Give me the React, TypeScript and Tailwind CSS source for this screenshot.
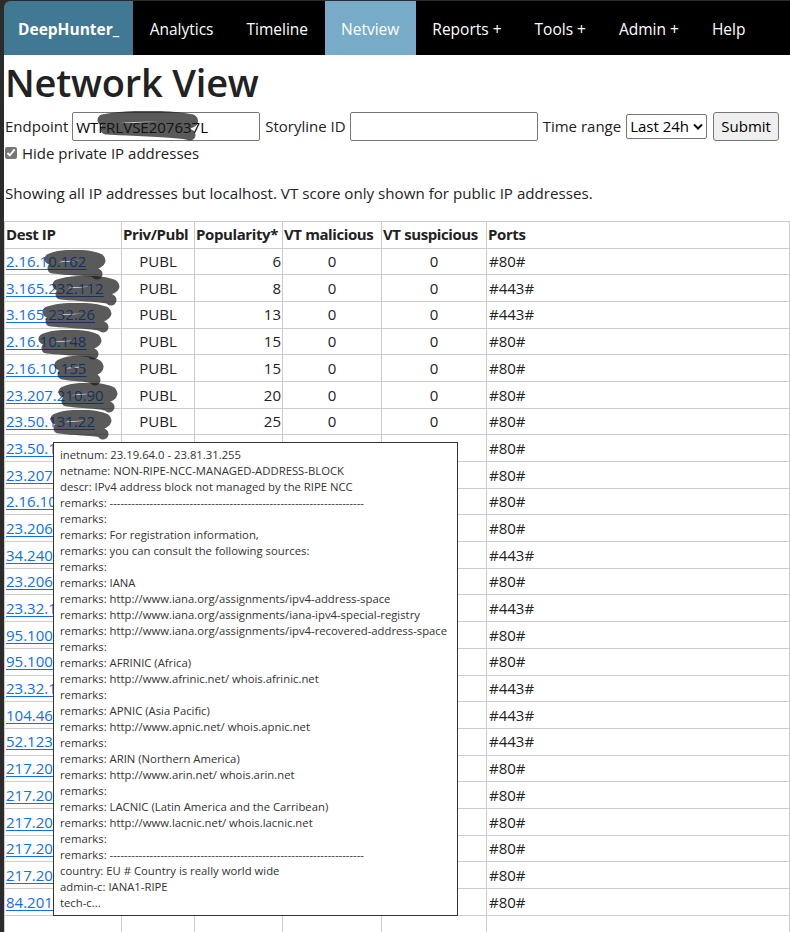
import React from 'react';

const navItems = [
  { label: 'Analytics', active: false },
  { label: 'Timeline', active: false },
  { label: 'Netview', active: true },
  { label: 'Reports +', active: false },
  { label: 'Tools +', active: false },
  { label: 'Admin +', active: false },
  { label: 'Help', active: false },
];

type Row = { ip: string; pop: number | string; port: string; blot?: [number, number] };

const rows: Row[] = [
  { ip: '2.16.10.162', pop: 6, port: '#80#', blot: [38, 64] },
  { ip: '3.165.232.112', pop: 8, port: '#443#', blot: [46, 70] },
  { ip: '3.165.232.26', pop: 13, port: '#443#', blot: [36, 72] },
  { ip: '2.16.10.148', pop: 15, port: '#80#', blot: [32, 66] },
  { ip: '2.16.10.155', pop: 15, port: '#80#', blot: [48, 52] },
  { ip: '23.207.210.90', pop: 20, port: '#80#', blot: [52, 62] },
  { ip: '23.50.131.22', pop: 25, port: '#80#', blot: [44, 64] },
  { ip: '23.50.131.10', pop: 27, port: '#80#' },
  { ip: '23.207.210.72', pop: 31, port: '#80#' },
  { ip: '2.16.10.170', pop: 34, port: '#80#' },
  { ip: '23.206.229.8', pop: 40, port: '#80#' },
  { ip: '34.240.12.201', pop: 52, port: '#443#' },
  { ip: '23.206.229.41', pop: 61, port: '#80#' },
  { ip: '23.32.16.120', pop: 77, port: '#443#' },
  { ip: '95.100.52.14', pop: 93, port: '#80#' },
  { ip: '95.100.52.30', pop: 110, port: '#80#' },
  { ip: '23.32.16.99', pop: 154, port: '#443#' },
  { ip: '104.46.162.224', pop: 213, port: '#443#' },
  { ip: '52.123.129.14', pop: 305, port: '#443#' },
  { ip: '217.20.57.19', pop: 420, port: '#80#' },
  { ip: '217.20.57.34', pop: 566, port: '#80#' },
  { ip: '217.20.57.35', pop: 781, port: '#80#' },
  { ip: '217.20.57.18', pop: 1020, port: '#80#' },
  { ip: '217.20.57.20', pop: 1744, port: '#80#' },
  { ip: '84.201.210.23', pop: 3013, port: '#80#' },
];

const dashes = '-'.repeat(70);

const whois = [
  'inetnum: 23.19.64.0 - 23.81.31.255',
  'netname: NON-RIPE-NCC-MANAGED-ADDRESS-BLOCK',
  'descr: IPv4 address block not managed by the RIPE NCC',
  `remarks: ${dashes}`,
  'remarks:',
  'remarks: For registration information,',
  'remarks: you can consult the following sources:',
  'remarks:',
  'remarks: IANA',
  'remarks: http://www.iana.org/assignments/ipv4-address-space',
  'remarks: http://www.iana.org/assignments/iana-ipv4-special-registry',
  'remarks: http://www.iana.org/assignments/ipv4-recovered-address-space',
  'remarks:',
  'remarks: AFRINIC (Africa)',
  'remarks: http://www.afrinic.net/ whois.afrinic.net',
  'remarks:',
  'remarks: APNIC (Asia Pacific)',
  'remarks: http://www.apnic.net/ whois.apnic.net',
  'remarks:',
  'remarks: ARIN (Northern America)',
  'remarks: http://www.arin.net/ whois.arin.net',
  'remarks:',
  'remarks: LACNIC (Latin America and the Carribean)',
  'remarks: http://www.lacnic.net/ whois.lacnic.net',
  'remarks:',
  `remarks: ${dashes}`,
  'country: EU # Country is really world wide',
  'admin-c: IANA1-RIPE',
  'tech-c...',
];

// marker scribble used to redact part of a value
const Blot: React.FC<{ left: number; width: number; className?: string }> = ({ left, width, className }) => (
  <svg
    className={`pointer-events-none absolute ${className ?? 'top-[1px]'}`}
    style={{ left }}
    width={width}
    height={32}
    viewBox={`0 0 ${width} 32`}
  >
    <path
      d={`M7 9 C ${width * 0.3} 4, ${width * 0.7} 4, ${width - 8} 9 C ${width - 2} 14, ${width * 0.6} 17, 10 18 C ${width * 0.4} 20, ${width * 0.8} 20, ${width - 10} 24`}
      fill="none"
      stroke="#1a1a1a"
      strokeOpacity={0.72}
      strokeWidth={11}
      strokeLinecap="round"
      strokeLinejoin="round"
    />
  </svg>
);

const App: React.FC = () => {
  return (
    <div className="min-h-screen bg-[#2b2b2b] pl-[4px] pt-[1px]">
      <div className="relative min-h-[931px] overflow-hidden rounded-tl-[7px] bg-white font-['Open_Sans',sans-serif] text-[#222]">
        {/* Top bar */}
        <nav className="flex h-[54px] items-stretch bg-black text-[15.5px] text-white">
          <a href="#" className="flex items-center bg-[#417894] px-[14px] pt-[3px] font-bold">
            DeepHunter_
          </a>
          {navItems.map((item) => (
            <a
              key={item.label}
              href="#"
              className={`flex items-center px-[16.5px] pt-[3px] ${item.active ? 'bg-[#77abc7]' : ''}`}
            >
              {item.label}
            </a>
          ))}
        </nav>

        <div className="pl-[1px]">
          <h1 className="mt-[5px] text-[38px] leading-[44px] font-semibold tracking-[-0.2px] text-[#222]">Network View</h1>

          {/* Filters */}
          <form className="mt-[8px] flex items-center text-[15px]">
            <label>Endpoint</label>
            <div className="relative ml-[4px]">
              <input
                className="h-[29px] w-[188px] rounded-[2px] border border-[#767676] px-[3px] text-[15px] text-black"
                defaultValue="WTFRLVSE207637L"
              />
              <Blot left={24} width={104} className="top-[-1px]" />
            </div>
            <label className="ml-[5px]">Storyline ID</label>
            <input className="ml-[4px] h-[29px] w-[188px] rounded-[2px] border border-[#767676]" />
            <label className="ml-[5px]">Time range</label>
            <div className="relative ml-[5px]">
              <select className="h-[25px] w-[81px] appearance-none rounded-[2px] border border-[#767676] pl-[3px] text-[15px] text-black">
                <option>Last 24h</option>
              </select>
              <svg className="pointer-events-none absolute top-[9px] right-[4px]" width="10" height="7" viewBox="0 0 10 7">
                <path d="M1 1.5 L5 5.5 L9 1.5" fill="none" stroke="#111" strokeWidth="2" />
              </svg>
            </div>
            <button
              type="button"
              className="ml-[6px] h-[29px] w-[66px] rounded-[3px] border border-[#767676] bg-[#efefef] text-[15px] text-black"
            >
              Submit
            </button>
          </form>

          <label className="mt-[1px] flex items-center text-[15px]">
            <input type="checkbox" defaultChecked className="h-[12px] w-[12px] accent-[#767676]" />
            <span className="ml-[5px]">Hide private IP addresses</span>
          </label>

          <p className="mt-[17px] text-[15.15px] leading-[22px]">
            Showing all IP addresses but localhost. VT score only shown for public IP addresses.
          </p>
        </div>

        {/* Results */}
        <table className="mt-[17px] w-full table-fixed border-collapse text-[15px]">
          <colgroup>
            <col className="w-[117px]" />
            <col className="w-[73px]" />
            <col className="w-[88px]" />
            <col className="w-[99px]" />
            <col className="w-[105px]" />
            <col />
          </colgroup>
          <thead>
            <tr className="h-[27px] text-left font-bold whitespace-nowrap">
              <th className="border border-[#ccc] px-[1px] text-[15px] tracking-[-0.4px]">Dest IP</th>
              <th className="border border-[#ccc] px-[1px] text-[15px] tracking-[-0.4px]">Priv/Publ</th>
              <th className="border border-[#ccc] px-[1px] text-[15px] tracking-[-0.4px]">Popularity*</th>
              <th className="border border-[#ccc] px-[1px] text-[15px] tracking-[-0.4px]">VT malicious</th>
              <th className="border border-[#ccc] px-[1px] text-[15px] tracking-[-0.4px]">VT suspicious</th>
              <th className="border border-[#ccc] px-[1px] text-[15px] tracking-[-0.4px]">Ports</th>
            </tr>
          </thead>
          <tbody>
            {rows.map((r, i) => (
              <tr key={i} className="h-[26.7px]">
                <td className="relative border border-[#ccc] px-[1px] whitespace-nowrap">
                  <a href="#" className="text-[#0d6efd] underline underline-offset-2">
                    {r.ip}
                  </a>
                  {r.blot && <Blot left={r.blot[0]} width={r.blot[1]} />}
                </td>
                <td className="border border-[#ccc] text-center">PUBL</td>
                <td className="border border-[#ccc] px-[1px] text-right">{r.pop}</td>
                <td className="border border-[#ccc] text-center">0</td>
                <td className="border border-[#ccc] text-center">0</td>
                <td className="border border-[#ccc] px-[2px]">{r.port}</td>
              </tr>
            ))}
            <tr className="h-[26.7px]">
              <td className="border border-[#ccc]" />
              <td className="border border-[#ccc]" />
              <td className="border border-[#ccc]" />
              <td className="border border-[#ccc]" />
              <td className="border border-[#ccc]" />
              <td className="border border-[#ccc]" />
            </tr>
          </tbody>
        </table>

        <div className="absolute top-[441px] left-[49px] w-[405px] border border-[#333] bg-white px-[6px] py-[4px] text-[11.3px] leading-[16px] whitespace-nowrap text-[#333]">
          {whois.map((line, i) => (
            <div key={i}>{line}</div>
          ))}
        </div>
      </div>
    </div>
  );
};

export default App;
